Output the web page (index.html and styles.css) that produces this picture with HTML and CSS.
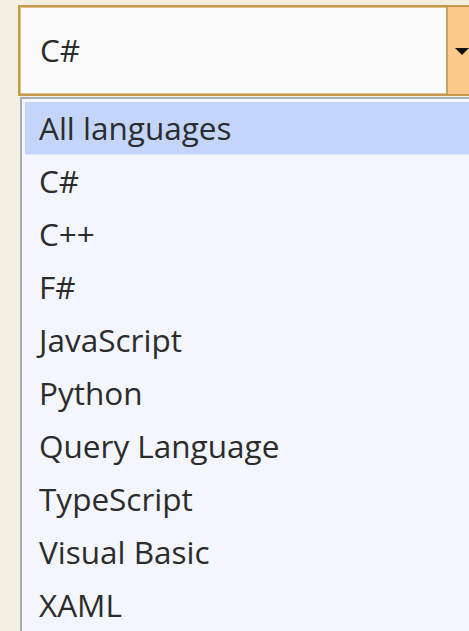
FILE: index.html
```html
<!DOCTYPE html>
<html>
<head>
<meta charset="utf-8">
<link rel="stylesheet" href="styles.css">
</head>
<body>
<div class="page">
  <div class="combo">
    <div class="combo-value">C#</div>
    <div class="combo-button"><span class="arrow"></span></div>
  </div>
  <ul class="list">
    <li class="item selected">All languages</li>
    <li class="item">C#</li>
    <li class="item">C++</li>
    <li class="item">F#</li>
    <li class="item">JavaScript</li>
    <li class="item">Python</li>
    <li class="item">Query Language</li>
    <li class="item">TypeScript</li>
    <li class="item">Visual Basic</li>
    <li class="item">XAML</li>
  </ul>
</div>
</body>
</html>
```
FILE: styles.css
```css
html, body {
  margin: 0;
  padding: 0;
  background: #f3f0e1;
  overflow: hidden;
}
.page {
  width: 469px;
  height: 631px;
  padding: 5px 0 0 18px;
  box-sizing: border-box;
  overflow: hidden;
  font-family: "Open Sans", "Noto Sans", sans-serif;
  color: #2c2c2c;
}
.combo {
  display: flex;
  height: 91px;
  width: 470px;
  flex-shrink: 0;
  box-sizing: border-box;
  border: 2px solid #c69a4c;
  box-shadow: inset 0 0 0 1px #e0c089;
  background: #fbfbfb;
}
.combo-value {
  flex: 1;
  display: flex;
  align-items: center;
  padding-left: 20px;
  font-size: 31.5px;
  padding-bottom: 2px;
}
.combo-button {
  width: 40px;
  flex-shrink: 0;
  background: #f8cb8b;
  border-left: 2px solid #c9a366;
  display: flex;
  align-items: center;
  padding-left: 7px;
  padding-top: 2px;
  box-sizing: border-box;
}
.arrow {
  width: 0;
  height: 0;
  border-left: 7px solid transparent;
  border-right: 7px solid transparent;
  border-top: 7px solid #111;
}
.list {
  list-style: none;
  margin: 1px 0 0 2px;
  padding: 3px 0 0 3px;
  width: 460px;
  height: 540px;
  box-sizing: border-box;
  background: #f3f6fd;
  border-top: 2px solid #a9adb8;
  border-left: 2px solid #a9adb8;
}
.item {
  height: 53px;
  line-height: 51px;
  padding-left: 14px;
  font-size: 31.5px;
  white-space: nowrap;
}
.item.selected {
  background: #c4d5fb;
  border-bottom: 1px solid #dfe7fb;
  box-sizing: border-box;
}
```
